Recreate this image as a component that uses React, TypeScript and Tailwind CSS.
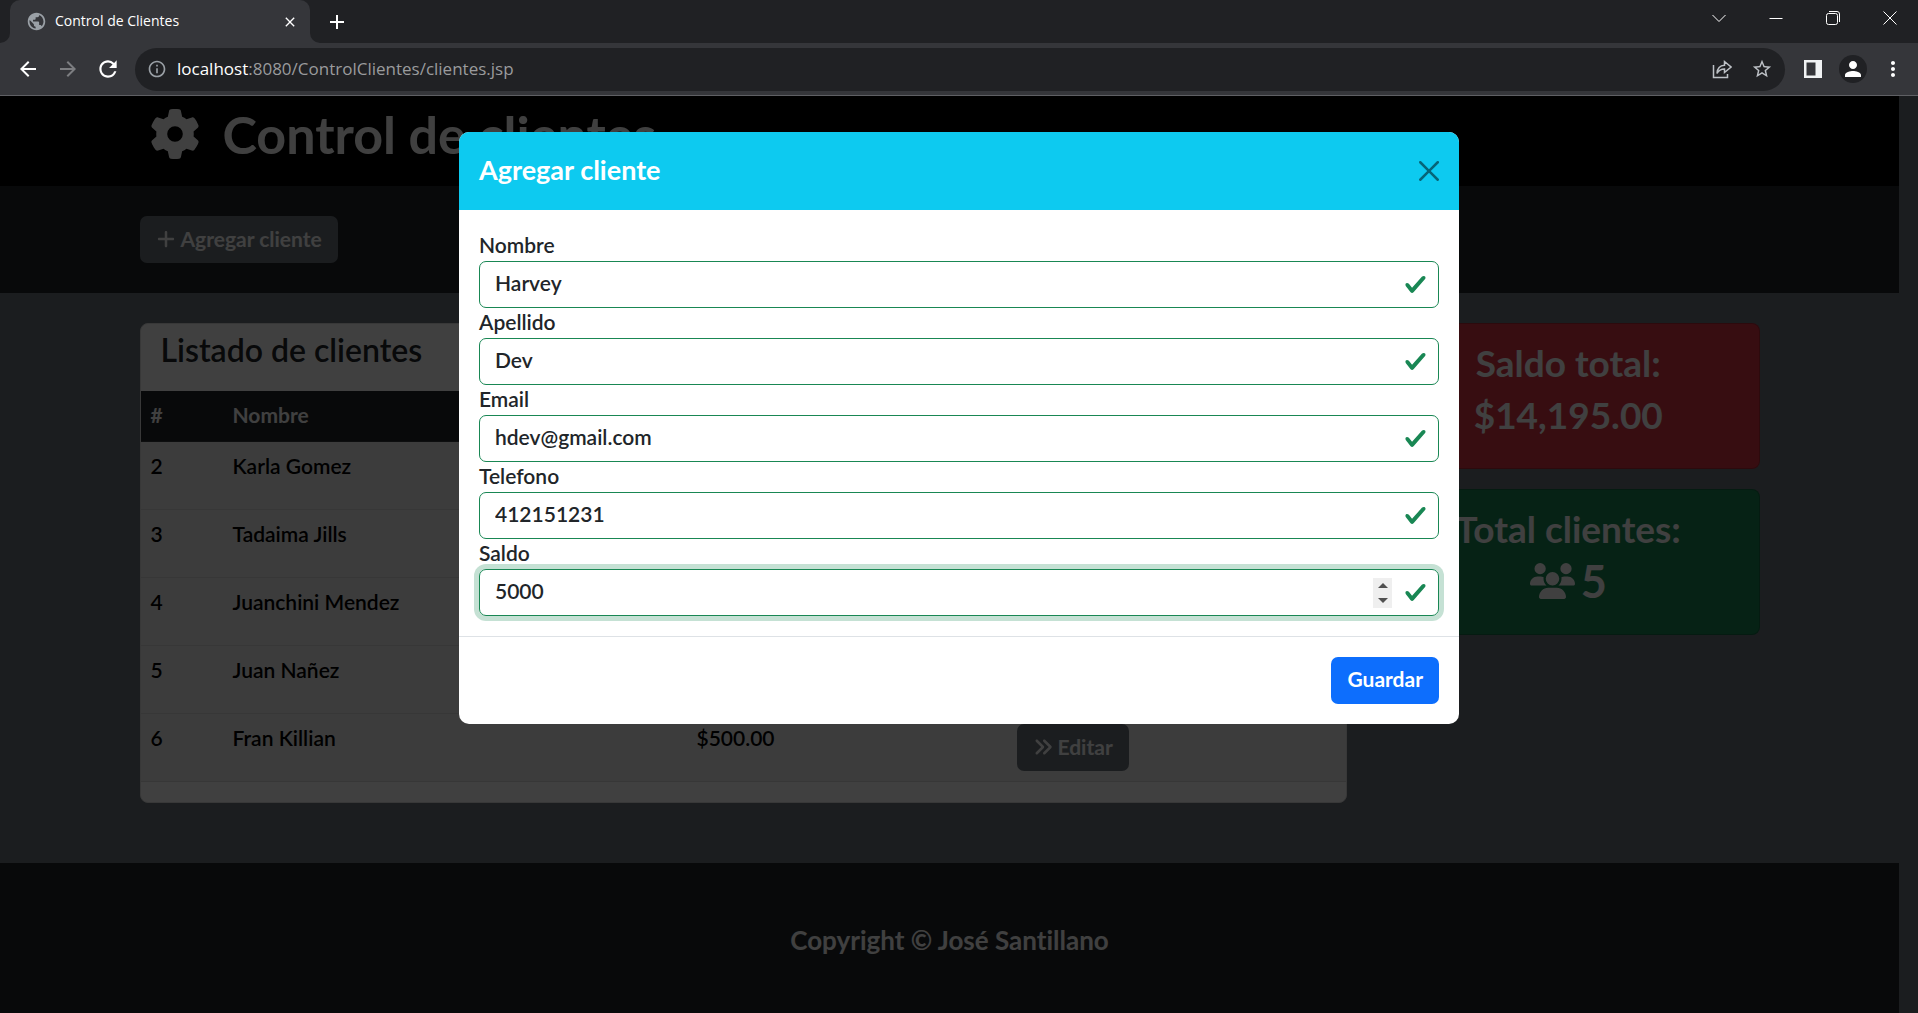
import { useState } from "react";
import { FaGear, FaPlus, FaAnglesRight, FaUsers } from "react-icons/fa6";
import {
  MdAdd,
  MdArrowBack,
  MdArrowForward,
  MdClose,
  MdInfoOutline,
  MdMoreVert,
  MdPerson,
  MdPublic,
  MdRefresh,
  MdStarBorder,
} from "react-icons/md";

const clients = [
  { id: 2, name: "Karla Gomez", balance: "$3,500.00" },
  { id: 3, name: "Tadaima Jills", balance: "$4,695.00" },
  { id: 4, name: "Juanchini Mendez", balance: "$2,500.00" },
  { id: 5, name: "Juan Nañez", balance: "$3,000.00" },
  { id: 6, name: "Fran Killian", balance: "$500.00" },
];

const fields = [
  { id: "nombre", label: "Nombre", type: "text", value: "Harvey" },
  { id: "apellido", label: "Apellido", type: "text", value: "Dev" },
  { id: "email", label: "Email", type: "email", value: "hdev@gmail.com" },
  { id: "telefono", label: "Telefono", type: "tel", value: "412151231" },
  { id: "saldo", label: "Saldo", type: "number", value: "5000" },
];

function TabCorner({ flip = false }: { flip?: boolean }) {
  return (
    <svg
      viewBox="0 0 10 10"
      className={flip ? "size-[10px] -scale-x-100 text-[#35363a]" : "size-[10px] text-[#35363a]"}
      aria-hidden="true"
    >
      <path d="M10 0v10H0A10 10 0 0 0 10 0z" fill="currentColor" />
    </svg>
  );
}

function WindowControls() {
  const button = "flex h-9 w-[57px] items-center justify-center text-white";
  return (
    <div className="flex">
      <button className={button} aria-label="Buscar pestañas">
        <svg viewBox="0 0 14 14" className="size-[14px]" fill="none" stroke="currentColor">
          <path d="M.5 4l6.5 6.5L13.5 4" />
        </svg>
      </button>
      <button className={button} aria-label="Minimizar">
        <svg viewBox="0 0 14 14" className="size-[14px]" fill="none" stroke="currentColor">
          <path d="M.5 7.5h13" />
        </svg>
      </button>
      <button className={button} aria-label="Restaurar">
        <svg viewBox="0 0 14 14" className="size-[14px]" fill="none" stroke="currentColor">
          <rect x=".5" y="2.5" width="11" height="11" rx="2" />
          <path d="M3 .5h8a2.5 2.5 0 0 1 2.500 2.500V11" />
        </svg>
      </button>
      <button className={button} aria-label="Cerrar">
        <svg viewBox="0 0 14 14" className="size-[14px]" fill="none" stroke="currentColor">
          <path d="M.5 .5l13 13M13.5 .5l-13 13" />
        </svg>
      </button>
    </div>
  );
}

function BrowserChrome() {
  const tool = "flex size-10 items-center justify-center text-white";
  return (
    <div className="shrink-0 font-['Open_Sans',sans-serif]">
      <div className="flex h-[43px] bg-[#202124]">
        <div className="flex grow items-end">
          <TabCorner />
          <div className="flex h-[43px] w-[300px] items-center rounded-t-[10px] bg-[#35363a] pr-2 pl-4 text-white">
            <MdPublic className="size-[21px] text-[#9aa0a6]" />
            <span className="grow pb-0.5 pl-2 text-[14px]">Control de Clientes</span>
            <button className="flex size-6 items-center justify-center" aria-label="Cerrar pestaña">
              <MdClose className="size-4" />
            </button>
          </div>
          <TabCorner flip />
          <button className="ml-1 flex h-[43px] w-[26px] items-center justify-center text-white" aria-label="Nueva pestaña">
            <MdAdd className="size-6" />
          </button>
        </div>
        <WindowControls />
      </div>
      <div className="flex h-[53px] items-center border-b border-[#5f6064] bg-[#35363a] pr-[5px] pl-2">
        <button className={tool} aria-label="Atrás">
          <MdArrowBack className="size-6" />
        </button>
        <button className="flex size-10 items-center justify-center text-[#7d7e81]" aria-label="Adelante">
          <MdArrowForward className="size-6" />
        </button>
        <button className={tool} aria-label="Recargar">
          <MdRefresh className="size-[26px]" />
        </button>
        <div className="ml-[7px] flex h-[43px] grow items-center rounded-full bg-[#202124] pr-[3px] pl-3 text-[#9aa0a6]">
          <MdInfoOutline className="size-5" />
          <div
            role="textbox"
            aria-label="Dirección"
            contentEditable
            suppressContentEditableWarning
            className="grow pl-[10px] text-[17px] text-[#9a9b9d] outline-none"
          >
            <span className="text-white">localhost</span>:8080/ControlClientes/clientes.jsp
          </div>
          <button className="flex size-10 items-center justify-center text-[#bdc1c6]" aria-label="Compartir">
            <svg viewBox="0 0 20 20" className="size-5" fill="none" stroke="currentColor" strokeWidth="1.500">
              <path d="M1.500 6v12.500h14V15" />
              <path d="M5 14.500c.3-4.800 2.700-8 7.500-8.200V2.500L19 8l-6.500 5.500V10c-3.700 0-5.800 1.300-7.500 4.500z" />
            </svg>
          </button>
          <button className="flex size-10 items-center justify-center text-[#bdc1c6]" aria-label="Añadir a marcadores">
            <MdStarBorder className="size-[22px]" />
          </button>
        </div>
        <button className="ml-2 flex size-10 items-center justify-center text-[#f1f3f4]" aria-label="Panel lateral">
          <svg viewBox="0 0 18 18" className="size-[18px]">
            <path fill="currentColor" fillRule="evenodd" d="M0 0h18v18H0zM2.500 2.500v13h9v-13z" />
          </svg>
        </button>
        <button className={tool} aria-label="Perfil">
          <span className="flex size-7 items-center justify-center rounded-full bg-[#202124]">
            <MdPerson className="size-6" />
          </span>
        </button>
        <button className={tool} aria-label="Menú">
          <MdMoreVert className="size-6" />
        </button>
      </div>
    </div>
  );
}

function ClientTable() {
  const cell = "px-[10px] pt-[9px] pb-[11px]";
  return (
    <section className="w-3/4 px-[15px]">
      <div className="overflow-hidden rounded-lg border border-[#dfdfdf] bg-white">
        <div className="px-5 pt-2 pb-[23px]">
          <h4 className="text-[32px] leading-9 font-semibold text-[#212529]">Listado de clientes</h4>
        </div>
        <table className="w-full table-fixed text-left text-[21px] leading-[30px] font-semibold text-black">
          <thead className="bg-[#212529] font-bold text-white">
            <tr className="border-b border-[#373b3e]">
              <th className={`${cell} w-[82px]`}>#</th>
              <th className={`${cell} w-[464px]`}>Nombre</th>
              <th className={`${cell} w-[320px]`}>Saldo</th>
              <th className={cell} />
            </tr>
          </thead>
          <tbody>
            {clients.map((c) => (
              <tr key={c.id} className="border-b border-[#dcdcdc] bg-[#ededed] align-top">
                <td className={cell}>{c.id}</td>
                <td className={cell}>{c.name}</td>
                <td className={cell}>{c.balance}</td>
                <td className="p-[10px]">
                  <a
                    href="#editar"
                    className="inline-flex h-[47px] items-center gap-[5px] rounded-[7px] bg-[#6c757d] px-4 pb-0.5 align-top font-bold text-white"
                  >
                    <FaAnglesRight className="size-5" />
                    Editar
                  </a>
                </td>
              </tr>
            ))}
          </tbody>
        </table>
        <div className="h-5" />
      </div>
    </section>
  );
}

function Summary() {
  const card = "rounded-lg border border-black/20 px-5 pt-[18px] pb-8 text-center text-white font-bold";
  return (
    <aside className="flex w-1/4 flex-col gap-5 px-[15px]">
      <div className={`${card} bg-[#dc3545]`}>
        <h3 className="mb-[10px] text-[37px] leading-[42px]">Saldo total:</h3>
        <h4 className="text-[37px] leading-[42px]">$14,195.00</h4>
      </div>
      <div className={`${card} bg-[#198754]`}>
        <h3 className="mb-[10px] text-[37px] leading-[42px]">Total clientes:</h3>
        <h4 className="flex items-center justify-center gap-[6px] text-[45px] leading-[42px]">
          <FaUsers className="h-9 w-[45px]" />5
        </h4>
      </div>
    </aside>
  );
}

function AddClientModal() {
  const [values, setValues] = useState(() => fields.map((f) => f.value));
  const update = (i: number, v: string) => setValues((all) => all.map((old, j) => (j === i ? v : old)));

  return (
    <div
      role="dialog"
      aria-modal="true"
      aria-labelledby="modal-title"
      className="w-full max-w-[1000px] overflow-hidden rounded-[10px] bg-white"
    >
      <div className="flex h-[78px] items-center justify-between bg-[#0dcaf0] px-5">
        <h5 id="modal-title" className="pb-[3px] text-[27px] leading-8 font-bold text-white">
          Agregar cliente
        </h5>
        <button className="text-black/50" aria-label="Cerrar">
          <svg viewBox="0 0 16 16" className="size-5" fill="currentColor">
            <path d="M.293.293a1 1 0 0 1 1.414 0L8 6.586 14.293.293a1 1 0 1 1 1.414 1.414L9.414 8l6.293 6.293a1 1 0 0 1-1.414 1.414L8 9.414l-6.293 6.293a1 1 0 0 1-1.414-1.414L6.586 8 .293 1.707a1 1 0 0 1 0-1.414z" />
          </svg>
        </button>
      </div>
      <form onSubmit={(e) => e.preventDefault()} className="text-[21px] font-semibold text-[#212529]">
        <div className="px-5 pt-[21px] pb-5">
          {fields.map((f, i) => {
            const isNumber = f.type === "number";
            return (
              <div key={f.id}>
                <label htmlFor={f.id} className="block pb-0.5 leading-7">
                  {f.label}
                </label>
                <div
                  className={
                    isNumber
                      ? "relative h-[47px] rounded-[7px] border border-[#198754] ring-5 ring-[#198754]/25"
                      : "relative h-[47px] rounded-[7px] border border-[#198754]"
                  }
                >
                  <input
                    id={f.id}
                    type={f.type}
                    value={values[i]}
                    onChange={(e) => update(i, e.target.value)}
                    className="h-full w-full [appearance:textfield] rounded-[7px] bg-transparent pr-20 pb-1 pl-[15px] outline-none"
                  />
                  {isNumber && (
                    <span className="absolute top-2 right-[46px] flex h-[30px] w-[19px] flex-col bg-[#efefef] text-[#505050]">
                      <button
                        type="button"
                        aria-label="Aumentar"
                        onClick={() => update(i, String(Number(values[i]) + 1))}
                        className="flex flex-1 items-center justify-center"
                      >
                        <svg viewBox="0 0 10 5" className="h-[5px] w-[10px]" fill="currentColor">
                          <path d="M0 5l5-5 5 5z" />
                        </svg>
                      </button>
                      <button
                        type="button"
                        aria-label="Disminuir"
                        onClick={() => update(i, String(Number(values[i]) - 1))}
                        className="flex flex-1 items-center justify-center"
                      >
                        <svg viewBox="0 0 10 5" className="h-[5px] w-[10px]" fill="currentColor">
                          <path d="M0 0l5 5 5-5z" />
                        </svg>
                      </button>
                    </span>
                  )}
                  <svg
                    viewBox="0 0 8 8"
                    className="absolute top-[11px] right-[11px] size-[23px] text-[#198754]"
                    fill="currentColor"
                    aria-hidden="true"
                  >
                    <path d="M2.3 6.73.6 4.53c-.4-1.04.46-1.4 1.1-.8l1.1 1.4 3.4-3.8c.6-.63 1.6-.27 1.2.7l-4 4.6c-.43.5-.8.4-1.1.1z" />
                  </svg>
                </div>
              </div>
            );
          })}
        </div>
        <div className="flex justify-end border-t border-[#dee2e6] p-5">
          <button type="submit" className="h-[47px] rounded-[7px] bg-[#0d6efd] px-4 pb-[3px] font-bold text-white">
            Guardar
          </button>
        </div>
      </form>
    </div>
  );
}

export default function App() {
  return (
    <div className="flex min-h-screen flex-col font-[Lato,sans-serif] [font-variant-ligatures:none]">
      <BrowserChrome />
      <div className="relative flex grow flex-col bg-[#6c757d] pr-[19px]">
        <header className="bg-black pt-2 pb-[22px]">
          <div className="mx-auto flex max-w-[1650px] items-center gap-[23px] px-[25px] text-white">
            <FaGear className="size-[50px]" />
            <h1 className="text-[52px] leading-[60px] font-bold">Control de clientes</h1>
          </div>
        </header>
        <div className="bg-[#212529] py-[30px]">
          <div className="mx-auto max-w-[1650px] px-[15px]">
            <button className="flex h-[47px] items-center gap-[5px] rounded-[7px] bg-[#6c757d] px-4 pb-0.5 text-[21px] font-bold text-white">
              <FaPlus className="size-5" />
              Agregar cliente
            </button>
          </div>
        </div>
        <main className="mx-auto flex w-full max-w-[1650px] items-start py-[30px]">
          <ClientTable />
          <Summary />
        </main>
        <footer className="mt-[30px] flex grow items-center justify-center bg-[#212529] px-5 pt-[60px] pb-14">
          <p className="text-[26px] leading-8 font-bold text-white">Copyright © José Santillano</p>
        </footer>
        <div className="absolute inset-0 flex items-start justify-center bg-black/75 pt-9">
          <AddClientModal />
        </div>
      </div>
    </div>
  );
}
